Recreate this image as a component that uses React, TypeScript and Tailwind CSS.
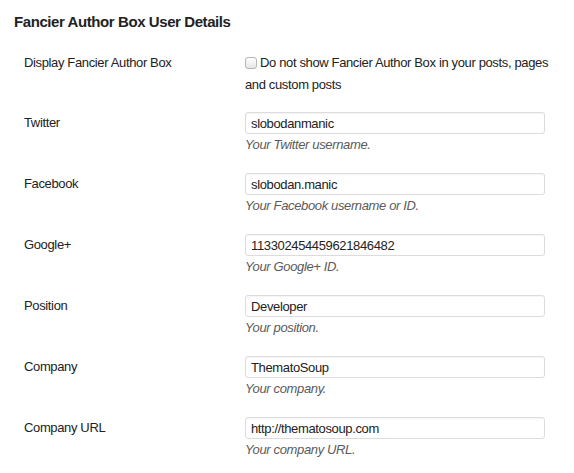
import React from 'react';

interface Field {
  label: string;
  value: string;
  hint: string;
}

const fields: Field[] = [
  { label: 'Twitter', value: 'slobodanmanic', hint: 'Your Twitter username.' },
  { label: 'Facebook', value: 'slobodan.manic', hint: 'Your Facebook username or ID.' },
  { label: 'Google+', value: '113302454459621846482', hint: 'Your Google+ ID.' },
  { label: 'Position', value: 'Developer', hint: 'Your position.' },
  { label: 'Company', value: 'ThematoSoup', hint: 'Your company.' },
  { label: 'Company URL', value: 'http://thematosoup.com', hint: 'Your company URL.' },
];

const App: React.FC = () => {
  return (
    <div className="min-h-[473px] w-[574px] bg-white font-['Liberation_Sans',Arial,sans-serif] text-[13px] tracking-[-0.36px] text-[#222]">
      <h2 className="pl-[14px] pt-[12px] text-[15px] font-bold leading-[20px] tracking-[-0.42px] text-[#222]">
        Fancier Author Box User Details
      </h2>

      <div className="mt-[20px] pl-[24px]">
        {/* Display toggle */}
        <div className="mb-[16px] flex">
          <div className="w-[221px] leading-[22px]">Display Fancier Author Box</div>
          <label className="w-[300px] leading-[22px]">
            <span className="whitespace-nowrap">
              <input
                type="checkbox"
                className="mr-[3px] inline-block h-[12px] w-[12px] translate-y-[1px] appearance-none rounded-[3px] border border-[#b5b5b5] bg-gradient-to-b from-white to-[#e6e6e6] align-[-1px]"
              />
              Do not show Fancier Author Box in your posts, pages
            </span>
            <br />
            and custom posts
          </label>
        </div>

        {fields.map((f) => (
          <div key={f.label} className="mb-[19px] flex">
            <div className="w-[221px] pt-[1px] leading-[20px]">{f.label}</div>
            <div className="w-[300px]">
              <input
                type="text"
                readOnly
                value={f.value}
                className="block h-[22px] w-[300px] rounded-[3px] border border-[#dcdcdc] bg-white px-[5px] text-[13px] leading-[20px] tracking-[-0.36px] text-[#222] shadow-[inset_0_1px_1px_rgba(0,0,0,0.04)] outline-none"
              />
              <p className="mt-[2px] italic leading-[18px] text-[#5a5a5a]">{f.hint}</p>
            </div>
          </div>
        ))}
      </div>
    </div>
  );
};

export default App;
